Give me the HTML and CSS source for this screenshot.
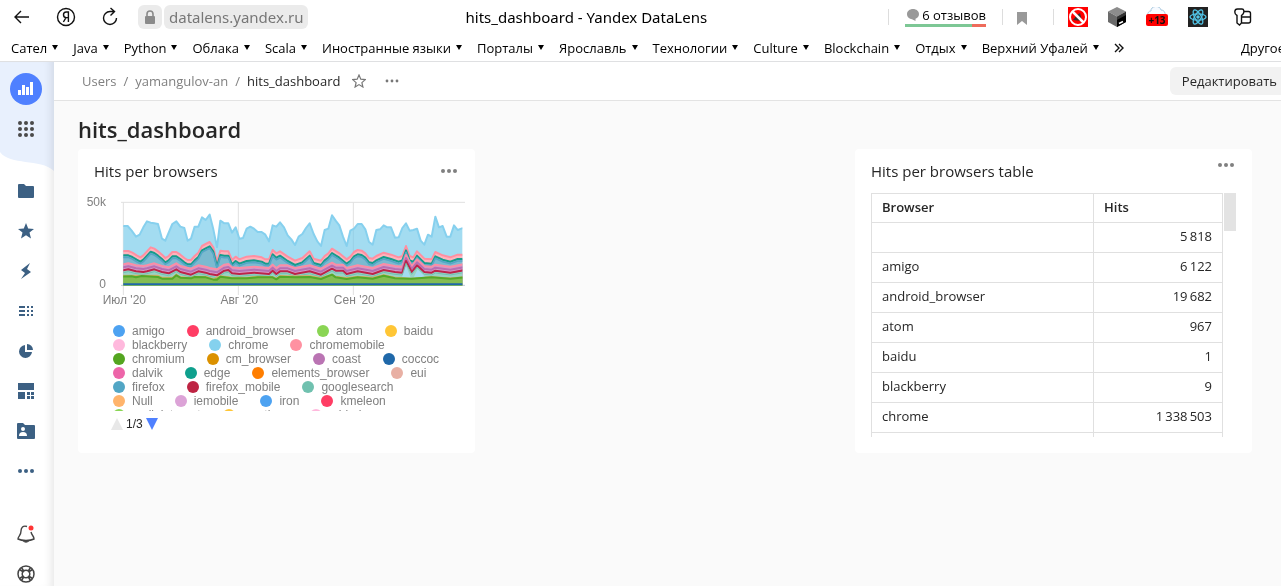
FILE: index.html
```html
<!DOCTYPE html>
<html lang="ru">
<head>
<meta charset="utf-8">
<title>hits_dashboard - Yandex DataLens</title>
<link rel="stylesheet" href="styles.css">
</head>
<body>
<header class="browser">
  <div class="toolbar">
    <div class="nav">
      <button class="icon-btn" aria-label="Назад"><svg width="18" height="18" viewBox="0 0 18 18" class="line"><path d="M16 9H3M8 3L2 9l6 6"/></svg></button>
      <button class="icon-btn" aria-label="Яндекс"><svg width="20" height="20" viewBox="0 0 20 20" class="line"><circle cx="10" cy="10" r="8.500"/><path d="M12.400 15V5h-2.200c-3.600 0-3.600 5.600 0 5.600h2.200M10 10.600L7.400 15"/></svg></button>
      <button class="icon-btn" aria-label="Обновить"><svg width="18" height="20" viewBox="0 0 18 20" class="line"><path d="M15.500 11A6.500 6.500 0 1 1 9 4.500h4M9.500 1l4 3.500-4 4"/></svg></button>
    </div>
    <div class="address">
      <button class="lock" aria-label="Защищённое соединение"><svg width="12" height="14" viewBox="0 0 12 14"><path d="M3 6V4a3 3 0 0 1 6 0v2" fill="none" stroke="#8a8a8a" stroke-width="1.600"/><rect x="1" y="6" width="10" height="8" rx="1" fill="#8a8a8a"/></svg></button>
      <a class="host" href="#">datalens.yandex.ru</a>
    </div>
    <div class="page-title">hits_dashboard - Yandex DataLens</div>
    <div class="extensions">
      <button class="reviews"><span class="reviews-text"><svg width="12" height="12" viewBox="0 0 12 12"><path d="M6 0C2.600 0 0 2.200 0 5.200S2.600 10 5 10.200L8.500 12v-2.300C10.600 9 12 7.400 12 5.200 12 2.200 9.400 0 6 0z" fill="#999"/></svg>6 отзывов</span><span class="rating"></span></button>
      <button class="mark" aria-label="Закладка"><svg width="10" height="13" viewBox="0 0 10 13"><path d="M0 0h10v13L5 9l-5 4z" fill="#999"/></svg></button>
      <div class="ext-icons">
        <button class="icon-btn" aria-label="Flash"><svg width="20" height="20" viewBox="0 0 20 20"><rect width="20" height="20" fill="#f00"/><path d="M5 13l4-5 3-2 2 8z" fill="#333"/><circle cx="10" cy="10" r="8" fill="none" stroke="#fff" stroke-width="2"/><path d="M4.500 4.500l11 11" stroke="#fff" stroke-width="2.500"/></svg></button>
        <button class="icon-btn" aria-label="Куб"><svg width="18" height="20" viewBox="0 0 18 20"><path d="M9 0l9 4.500-9 5-9-5z" fill="#8c8c8c"/><path d="M0 4.500l9 5V20l-9-5z" fill="#6a6a6a"/><path d="M18 4.500l-9 5V20l9-5z" fill="#333"/><path d="M9 13l9-5v7l-9 5z" fill="#000"/><path d="M11 16.500l4-2" stroke="#fff" stroke-width="1.500"/></svg></button>
        <button class="icon-btn" aria-label="Погода +13"><svg width="22" height="20" viewBox="0 0 22 20"><path d="M2 8a3 3 0 0 1 3-4 5 4 0 0 1 10-1 4 4 0 0 1 4 5z" fill="#f7faff" stroke="#a9c9df"/><rect y="7" width="22" height="12" rx="2" fill="#f00"/><text x="11" y="17" text-anchor="middle" class="temp">+13</text></svg></button>
        <button class="icon-btn" aria-label="React"><svg width="20" height="20" viewBox="0 0 20 20"><rect width="20" height="20" fill="#222"/><g fill="none" stroke="#52c5e8" stroke-width="1.300"><ellipse cx="10" cy="10" rx="8" ry="3.200"/><ellipse cx="10" cy="10" rx="8" ry="3.200" transform="rotate(60 10 10)"/><ellipse cx="10" cy="10" rx="8" ry="3.200" transform="rotate(120 10 10)"/></g><circle cx="10" cy="10" r="1.800" fill="#52c5e8"/></svg></button>
        <button class="icon-btn keys" aria-label="Пароли"><svg width="18" height="18" viewBox="0 0 18 18" class="line"><path d="M3 7.500C0 6 0 1 3.500 1H8c2 0 2.500 3 1 5L7.500 7.500V15L5.500 17 3 15zM10 3.500h4.500a2 2 0 0 1 2 2V13a2 2 0 0 1-2 2H8M8 9h8.500"/></svg></button>
      </div>
    </div>
  </div>
  <nav class="bookmarks">
    <button>Сател</button><button>Java</button><button>Python</button><button>Облака</button><button>Scala</button><button>Иностранные языки</button><button>Порталы</button><button>Ярославль</button><button>Технологии</button><button>Culture</button><button>Blockchain</button><button>Отдых</button><button>Верхний Уфалей</button>
    <button class="more" aria-label="Ещё"><svg width="10" height="10" viewBox="0 0 10 10" class="line"><path d="M1 1l4 4-4 4M5 1l4 4-4 4"/></svg></button>
    <button class="other">Другое</button>
  </nav>
</header>
<div class="app">
  <aside class="sidebar">
    <svg class="wave" width="54" height="110" viewBox="0 0 54 110"><path d="M0 0h54v109C40 96 10 104 0 90z" fill="#e8f0fd"/></svg>
    <nav class="side-nav">
      <a class="logo" href="#" aria-label="DataLens"><svg width="32" height="32" viewBox="0 0 32 32"><circle cx="16" cy="16" r="16" fill="#4f80ff"/><path d="M8 17h3v5H8zM12 12h3v10h-3zM16 14h3v8h-3zM20 9h3v13h-3z" fill="#fff"/></svg></a>
      <a href="#" aria-label="Сервисы"><svg width="18" height="18" viewBox="0 0 18 18" fill="#4a4a4a"><circle cx="3" cy="3" r="2"/><circle cx="9" cy="3" r="2"/><circle cx="15" cy="3" r="2"/><circle cx="3" cy="9" r="2"/><circle cx="9" cy="9" r="2"/><circle cx="15" cy="9" r="2"/><circle cx="3" cy="15" r="2"/><circle cx="9" cy="15" r="2"/><circle cx="15" cy="15" r="2"/></svg></a>
      <a class="first" href="#" aria-label="Папка"><svg width="16" height="14" viewBox="0 0 16 14"><path d="M0 1Q0 0 1 0h5l2 2h7q1 0 1 1v10q0 1-1 1H1q-1 0-1-1z"/></svg></a>
      <a href="#" aria-label="Избранное"><svg width="16" height="16" viewBox="0 0 16 16"><path d="M8 0l2.200 5.500 5.800.4-4.500 3.700L13 15.500l-5-3.200-5 3.200 1.500-5.900L0 5.900l5.800-.4z"/></svg></a>
      <a href="#" aria-label="Подключения"><svg width="12" height="18" viewBox="0 0 12 18"><path d="M10 1L1 8l4 3-4 6 10-7-4-3z"/></svg></a>
      <a href="#" aria-label="Датасеты"><svg width="14" height="10" viewBox="0 0 14 10"><path d="M0 0h6v2H0zM8 0h2v2H8zM12 0h2v2h-2zM0 4h6v2H0zM8 4h2v2H8zM12 4h2v2h-2zM0 8h6v2H0zM8 8h2v2H8zM12 8h2v2h-2z"/></svg></a>
      <a href="#" aria-label="Чарты"><svg width="14" height="14" viewBox="0 0 14 14"><path d="M6 1v7h7a6.500 6.500 0 1 1-7-7zM8 0a6 6 0 0 1 6 6H8z"/></svg></a>
      <a href="#" aria-label="Дашборды"><svg width="16" height="16" viewBox="0 0 16 16"><path d="M0 0h16v7H0zM0 9h7v7H0zM9 9h3v3H9zM13 9h3v3h-3zM9 13h3v3H9zM13 13h3v3h-3z"/></svg></a>
      <a href="#" aria-label="Личная папка"><svg width="18" height="16" viewBox="0 0 18 16"><path d="M0 1Q0 0 1 0h5l2 2h9q1 0 1 1v12q0 1-1 1H1q-1 0-1-1z"/><circle cx="6" cy="6" r="2" fill="#fff"/><path d="M2 13q0-4 4-4t4 4z" fill="#fff"/></svg></a>
      <a href="#" aria-label="Ещё"><svg width="16" height="4" viewBox="0 0 16 4"><circle cx="2" cy="2" r="2"/><circle cx="8" cy="2" r="2"/><circle cx="14" cy="2" r="2"/></svg></a>
      <a class="bell" href="#" aria-label="Уведомления"><svg width="18" height="18" viewBox="0 0 18 18"><path d="M10 1.500C6 0 4 3 4 6c0 5-3 5-3 8 4 2 12 2 16 0 0-3-2-3-3-7M6 16q3 2 6 0" fill="none" stroke="#444" stroke-width="1.400"/><circle cx="14" cy="3" r="2.500" fill="#ff3535"/></svg></a>
      <a href="#" aria-label="Помощь"><svg width="18" height="18" viewBox="0 0 18 18" fill="none" stroke="#444" stroke-width="1.500"><circle cx="9" cy="9" r="8"/><circle cx="9" cy="9" r="3.800"/><path d="M2.500 4.500l4 2.500M4.500 2.500L7 6.500M13.500 2.500L11 6.500M15.500 4.500l-4 2.500M2.500 13.500l4-2.500M4.500 15.500l2.500-4M13.500 15.500l-2.500-4M15.500 13.500l-4-2.500"/></svg></a>
    </nav>
  </aside>
  <main class="main">
    <div class="action-bar">
      <nav class="crumbs"><a href="#">Users</a><span>/</span><a href="#">yamangulov-an</a><span>/</span><a class="current" href="#">hits_dashboard</a></nav>
      <button class="icon-btn star" aria-label="В избранное"><svg width="14" height="14" viewBox="0 0 14 14"><path d="M7 1l1.800 4.200 4.500.4-3.400 3 1 4.400L7 10.600 3.100 13l1-4.400-3.400-3 4.500-.4z" fill="none" stroke="#777" stroke-width="1.200"/></svg></button>
      <button class="icon-btn" aria-label="Действия"><svg width="14" height="4" viewBox="0 0 14 4" fill="#777"><circle cx="2" cy="2" r="1.400"/><circle cx="7" cy="2" r="1.400"/><circle cx="12" cy="2" r="1.400"/></svg></button>
      <button class="edit">Редактировать</button>
    </div>
    <h1>hits_dashboard</h1>
    <div class="widgets">
      <section class="card chart-card">
        <div class="card-head"><h2>Hits per browsers</h2><button class="icon-btn" aria-label="Меню"><svg width="16" height="4" viewBox="0 0 16 4" fill="#808080"><circle cx="2" cy="2" r="2"/><circle cx="8" cy="2" r="2"/><circle cx="14" cy="2" r="2"/></svg></button></div>
        <svg class="chart" viewBox="9 153 1191 360" role="img" aria-label="Hits per browsers">
          <defs>
            <clipPath id="plot"><path d="M145 180H1162V437H145z"/></clipPath>
            <path id="mobile" d="M145 333L160 333 172 338 185 346 196 352 205 346 216 334 227 322 238 326 249 334 261 344 271 354 281 348 292 336 304 336 316 344 328 354 338 360 348 360 359 348 370 338 381 318 392 312 404 306 415 322 426 366 436 332 448 334 460 334 471 360 482 350 493 358 515 350 537 348 560 352 571 358 582 358 593 330 604 340 615 334 638 350 660 362 682 354 704 334 716 356 738 362 749 348 760 340 771 326 793 340 815 358 826 350 837 336 848 330 860 332 871 340 882 354 893 356 904 348 926 338 948 344 971 352 982 348 993 318 1004 348 1015 352 1026 334 1048 356 1070 358 1081 336 1103 346 1126 352 1148 344 1170 344V450H135V333z"/>
            <path id="low" d="M145 373L160 370 183 376 205 378 216 376 238 370 261 378 281 382 304 370 316 378 348 386 370 376 392 380 404 384 426 388 448 374 460 372 471 382 493 384 537 380 582 384 593 374 604 384 615 376 638 376 660 384 704 376 738 386 771 368 782 374 804 374 815 384 848 376 893 384 926 372 960 378 982 380 993 345 1010 378 1026 358 1048 378 1070 380 1081 374 1126 380 1170 372V450H135V373z"/>
          </defs>
          <path d="M138 187H1170M145 187V465M490 187V465M835 187V465" stroke="#e0e0e0" stroke-width="3" fill="none"/>
          <path d="M138 436H1170" stroke="#c0c8d8" stroke-width="3"/>
          <g clip-path="url(#plot)" stroke-width="6" stroke-linejoin="round">
            <path fill="#a3dcf1" stroke="#86d0ee" d="M135 258L158 258 170 272 183 290 194 284 205 262 216 244 227 248 238 250 249 252 261 296 271 302 281 278 292 252 304 244 316 260 328 264 338 302 348 296 359 260 370 260 381 232 392 240 404 224 415 268 426 322 436 242 448 250 460 250 471 278 482 262 493 296 504 294 515 266 526 260 537 266 548 276 560 276 571 284 582 304 593 256 604 260 615 247 627 262 638 286 649 298 660 315 671 290 682 282 693 264 704 250 716 282 727 304 738 318 749 270 760 266 771 226 782 242 793 256 804 290 815 318 826 272 837 266 848 252 860 252 871 268 882 306 893 314 904 270 915 268 926 256 937 262 948 262 960 293 971 292 982 264 993 250 1004 272 1015 270 1026 266 1037 302 1048 314 1059 284 1070 290 1081 230 1092 262 1103 258 1115 290 1126 290 1137 256 1148 270 1170 262V450H135z"/>
            <path d="M835 270V340M490 290V350" stroke="#98d0e6" stroke-width="3"/>
            <use href="#mobile" fill="#ffb3bd" stroke="#ff8fa1"/>
            <use href="#mobile" y="13" fill="#7bbad0" stroke="#169c8b"/>
            <use href="#mobile" y="19" fill="none" stroke="#56a6c6" stroke-width="5"/>
            <use href="#low" fill="#d19bc9" stroke="#fb8da6"/>
            <use href="#low" y="9" fill="#d59ccb" stroke="#b96eb2"/>
            <use href="#low" y="18" fill="#98d3c5" stroke="#bd2449"/>
            <use href="#low" y="25" fill="none" stroke="#71c2b1" stroke-width="3"/>
            <path fill="#a3dcf1" d="M980 415L993 378 1008 415zM1015 415L1028 388 1054 415z"/>
            <path fill="#84bd52" stroke="#dfac5c" stroke-width="3" d="M135 406L170 406 200 406 249 406 261 412 292 412 304 402 316 410 348 413 359 409 392 409 415 416 436 407 471 412 515 412 548 409 593 410 604 414 615 407 660 408 704 407 738 413 771 402 782 409 815 413 848 409 893 412 926 404 960 412 1010 415 1070 410 1126 414 1170 410V450H135z"/>
            <path fill="#84bd52" stroke="#53a929" d="M135 410L170 409 183 412 200 408 249 411 261 416 292 416 304 406 316 413 348 415 359 411 392 412 415 419 426 419 436 410 471 415 515 415 548 412 593 412 604 418 615 410 660 412 704 411 738 417 771 404 782 412 815 417 848 412 893 416 926 407 960 415 1010 416 1070 412 1126 416 1170 412V450H135z"/>
            <path d="M135 433H1170" stroke="#1f68a9"/>
          </g>
          <g class="axis"><text x="93" y="198" text-anchor="end">50k</text><text x="93" y="444" text-anchor="end">0</text><text x="148" y="492" text-anchor="middle">Июл '20</text><text x="493" y="492" text-anchor="middle">Авг '20</text><text x="838" y="492" text-anchor="middle">Сен '20</text></g>
        </svg>
        <div class="legend">
          <div class="row"><span class="c1">amigo</span><span class="c2">android_browser</span><span class="c3">atom</span><span class="c4">baidu</span></div>
          <div class="row"><span class="c5">blackberry</span><span class="c6">chrome</span><span class="c7">chromemobile</span></div>
          <div class="row"><span class="c8">chromium</span><span class="c9">cm_browser</span><span class="c10">coast</span><span class="c11">coccoc</span></div>
          <div class="row"><span class="c12">dalvik</span><span class="c13">edge</span><span class="c14">elements_browser</span><span class="c15">eui</span></div>
          <div class="row"><span class="c16">firefox</span><span class="c17">firefox_mobile</span><span class="c18">googlesearch</span></div>
          <div class="row"><span class="c19">Null</span><span class="c20">iemobile</span><span class="c1">iron</span><span class="c2">kmeleon</span></div>
          <div class="row"><span class="c3">mail_internet</span><span class="c4">maxthon</span><span class="c5">midori</span></div>
        </div>
        <div class="pager"><button class="up" aria-label="Назад" disabled></button><span>1/3</span><button class="down" aria-label="Вперёд"></button></div>
      </section>
      <section class="card table-card">
        <div class="card-head"><h2>Hits per browsers table</h2><button class="icon-btn" aria-label="Меню"><svg width="16" height="4" viewBox="0 0 16 4" fill="#808080"><circle cx="2" cy="2" r="2"/><circle cx="8" cy="2" r="2"/><circle cx="14" cy="2" r="2"/></svg></button></div>
        <div class="table-wrap">
          <table>
            <thead><tr><th>Browser</th><th>Hits</th></tr></thead>
            <tbody>
              <tr><td></td><td>5&thinsp;818</td></tr>
              <tr><td>amigo</td><td>6&thinsp;122</td></tr>
              <tr><td>android_browser</td><td>19&thinsp;682</td></tr>
              <tr><td>atom</td><td>967</td></tr>
              <tr><td>baidu</td><td>1</td></tr>
              <tr><td>blackberry</td><td>9</td></tr>
              <tr><td>chrome</td><td>1&thinsp;338&thinsp;503</td></tr>
              <tr><td></td><td></td></tr>
            </tbody>
          </table>
          <div class="thumb"></div>
        </div>
      </section>
    </div>
  </main>
</div>
</body>
</html>
```
FILE: styles.css
```css
* { box-sizing: border-box; }
body { margin: 0; height: 100vh; overflow: hidden; display: flex; flex-direction: column; background: #fff; color: #262626; font: 13px/18px "Open Sans", "Noto Sans", sans-serif; }
button { border: 0; padding: 0; background: none; color: inherit; font: inherit; white-space: nowrap; }
a { color: inherit; text-decoration: none; }
svg { display: block; flex: none; }
.line { fill: none; stroke: #111; stroke-width: 1.400; }
.icon-btn { display: flex; align-items: center; justify-content: center; flex: none; }

.browser { flex: none; border-bottom: 1px solid #dfe0e2; color: #000; }
.toolbar { height: 34px; display: flex; align-items: center; }
.nav { display: flex; gap: 25px; padding-left: 13px; }
.address { display: flex; gap: 2px; margin-left: 19px; }
.lock { width: 24px; height: 24px; border-radius: 6px; background: #ebebeb; display: flex; align-items: center; justify-content: center; }
.host { padding: 0 5px; height: 24px; border-radius: 6px; background: #ebebeb; color: #777; font: 15px/24px "Noto Sans", sans-serif; }
.page-title { flex: 1; padding-right: 24px; text-align: center; font: 15px/20px "Noto Sans", sans-serif; }
.extensions { display: flex; align-items: center; }
.reviews { border-left: 1px solid #ddd; height: 16px; padding: 0 16px; display: flex; flex-direction: column; justify-content: center; line-height: 14px; gap: 2px; }
.reviews-text { display: flex; align-items: center; gap: 3px; padding-left: 2px; }
.rating { flex: none; width: 100%; height: 3px; background: linear-gradient(to right, #7dc795 83%, #ee6b5b 83%); }
.mark { border: solid #ddd; border-width: 0 1px; height: 16px; padding: 2px 26px 0 14px; }
.ext-icons { display: flex; align-items: center; gap: 20px; padding: 0 29px 0 14px; }
.keys { margin-left: 6px; }
.temp { font: bold 10px "Noto Sans", sans-serif; fill: #111; }
.bookmarks { height: 27px; display: flex; align-items: center; gap: 15px; padding-left: 11px; overflow: hidden; }
.bookmarks button { flex: none; display: flex; align-items: center; gap: 5px; }
.bookmarks button:not(.more):not(.other)::after { content: ""; border: solid transparent; border-width: 5px 3px 0; border-top-color: #000; }
.bookmarks .other { margin-left: auto; margin-right: -4px; }

.app { flex: 1; min-height: 0; display: flex; }
.sidebar { position: relative; flex: none; width: 54px; overflow: hidden; background: #fff; box-shadow: inset -9px 0 8px -6px #e8e8e8; }
.wave { position: absolute; top: 0; left: 0; mix-blend-mode: multiply; }
.side-nav { position: relative; display: flex; flex-direction: column; padding-top: 7px; fill: #3c6083; }
.side-nav a { height: 40px; width: 52px; display: flex; align-items: center; justify-content: center; }
.side-nav .first { margin-top: 22px; }
.side-nav .bell { margin-top: 23px; }
.main { flex: 1; min-width: 0; background: #fafafa; }
.action-bar { height: 39px; display: flex; align-items: center; padding-left: 28px; background: #fff; border-bottom: 1px solid #e3e3e3; overflow: hidden; }
.crumbs { display: flex; gap: 7px; color: #808080; }
.crumbs .current { color: #262626; }
.star { margin: 0 19px 0 12px; }
.edit { margin-left: auto; height: 28px; padding: 0 4px 0 12px; border-radius: 6px 0 0 6px; background: #f2f2f2; }
h1 { margin: 0; padding: 13px 24px 4px; font-size: 22px; line-height: 31px; font-weight: 600; }
.widgets { display: flex; justify-content: space-between; padding: 0 29px 0 24px; }
.card { width: 397px; height: 304px; background: #fff; border-radius: 4px; overflow: hidden; }
.card-head { display: flex; justify-content: space-between; padding: 12px 18px 0 16px; }
.table-card .icon-btn { align-self: flex-start; padding-top: 2px; }
h2 { margin: 0; font-size: 15px; line-height: 20px; font-weight: 400; }
.chart { width: 100%; height: 120px; margin-top: 10px; }
.axis { font: 36px "Liberation Sans", sans-serif; fill: #808080; }
.legend { height: 87px; overflow: hidden; margin-top: 13px; padding-left: 35px; font: 12px/14px "Liberation Sans", sans-serif; color: #808080; }
.row { display: flex; gap: 22px; }
.row span { display: flex; align-items: center; gap: 7px; }
.row span::before { content: ""; width: 12px; height: 12px; border-radius: 50%; background: var(--c); }
.c1 { --c: #4da2f1; } .c2 { --c: #ff3d64; } .c3 { --c: #8ad554; } .c4 { --c: #ffc636; } .c5 { --c: #ffb9dd; }
.c6 { --c: #84d1ee; } .c7 { --c: #ff91a1; } .c8 { --c: #54a520; } .c9 { --c: #db9100; } .c10 { --c: #ba74b3; }
.c11 { --c: #1f68a9; } .c12 { --c: #ed65a9; } .c13 { --c: #0fa08d; } .c14 { --c: #ff7e00; } .c15 { --c: #e8b0a4; }
.c16 { --c: #52a6c5; } .c17 { --c: #be2443; } .c18 { --c: #70c1af; } .c19 { --c: #ffb46c; } .c20 { --c: #dca3d7; }
.pager { display: flex; align-items: center; gap: 3px; padding: 5px 0 0 33px; font: 12px/16px "Liberation Sans", sans-serif; }
.pager button { border: solid transparent; border-width: 0 6px 12px; border-bottom-color: #e8e8e8; }
.pager .down { border-width: 12px 6px 0; border-top-color: #4f80ff; }
.table-wrap { display: flex; align-items: flex-start; gap: 1px; height: 244px; overflow: hidden; padding-left: 16px; margin-top: 12px; }
table { width: 352px; border-collapse: collapse; table-layout: fixed; }
th, td { height: 30px; padding: 0 10px 3px; border: 1px solid #e0e0e0; text-align: left; line-height: 18px; font-weight: 400; }
th { height: 29px; padding-bottom: 2px; font-weight: 600; }
th:last-child { width: 129px; }
td:last-child { text-align: right; padding-bottom: 4px; }
.thumb { width: 12px; height: 38px; background: #e3e3e3; }
```
